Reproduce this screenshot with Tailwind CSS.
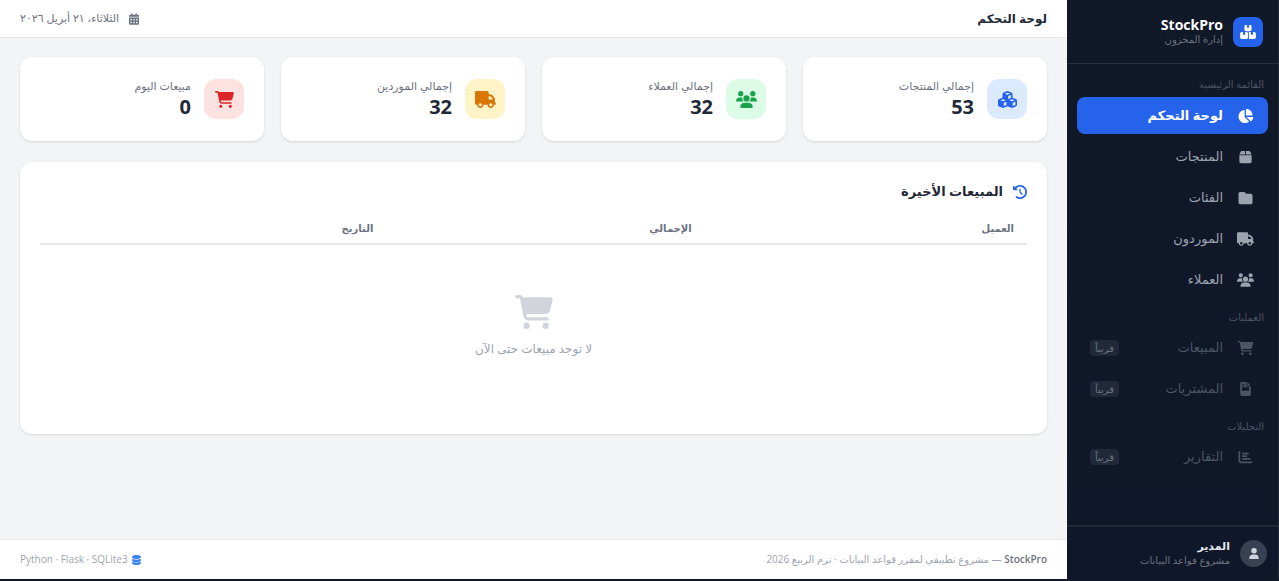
<!DOCTYPE html>
<html lang="ar" dir="rtl">
<head>
  <meta charset="UTF-8" />
  <title>لوحة التحكم | StockPro</title>
  <script src="https://cdn.jsdelivr.net/npm/@tailwindcss/browser@4"></script>
</head>
<body class="bg-[#111827] font-['Open_Sans','DejaVu_Sans',sans-serif] overflow-hidden">
  <svg class="hidden">
    <symbol id="i-cart" viewBox="0 0 576 512"><path d="M0 24C0 10.7 10.7 0 24 0H69.5c22 0 41.5 12.8 50.6 32h411c26.3 0 45.5 25 38.6 50.4l-41 152.3c-8.5 31.4-37 53.3-69.5 53.3H170.7l5.4 28.5c2.2 11.3 12.1 19.5 23.6 19.5H488c13.3 0 24 10.7 24 24s-10.7 24-24 24H199.7c-34.6 0-64.3-24.6-70.7-58.5L77.4 54.5c-.7-3.8-4-6.5-7.9-6.5H24C10.7 48 0 37.3 0 24zM128 464a48 48 0 1 1 96 0 48 48 0 1 1 -96 0zm336-48a48 48 0 1 1 0 96 48 48 0 1 1 0-96z"/></symbol>
    <symbol id="i-truck" viewBox="0 0 640 512"><path d="M48 0C21.5 0 0 21.5 0 48V368c0 26.5 21.5 48 48 48H64c0 53 43 96 96 96s96-43 96-96H384c0 53 43 96 96 96s96-43 96-96h32c17.7 0 32-14.3 32-32s-14.3-32-32-32V288 256 237.3c0-17-6.7-33.3-18.7-45.3L512 114.7c-12-12-28.3-18.7-45.3-18.7H416V48c0-26.5-21.5-48-48-48H48zM416 160h50.7L544 237.3V256H416V160zM112 416a48 48 0 1 1 96 0 48 48 0 1 1 -96 0zm368-48a48 48 0 1 1 0 96 48 48 0 1 1 0-96z"/></symbol>
    <symbol id="i-users" viewBox="0 0 640 512"><path d="M144 0a80 80 0 1 1 0 160A80 80 0 1 1 144 0zM512 0a80 80 0 1 1 0 160A80 80 0 1 1 512 0zM0 298.7C0 239.8 47.8 192 106.7 192h42.7c15.9 0 31 3.5 44.6 9.7c-1.3 7.2-1.9 14.7-1.9 22.3c0 38.2 16.8 72.5 43.3 96c-.2 0-.4 0-.7 0H21.3C9.6 320 0 310.4 0 298.7zM405.3 320c-.2 0-.4 0-.7 0c26.6-23.5 43.3-57.8 43.3-96c0-7.6-.7-15-1.9-22.3c13.6-6.3 28.7-9.7 44.6-9.7h42.7C592.2 192 640 239.8 640 298.7c0 11.8-9.6 21.3-21.3 21.3H405.3zM224 224a96 96 0 1 1 192 0 96 96 0 1 1 -192 0zM128 485.3C128 411.7 187.7 352 261.3 352H378.7C452.3 352 512 411.7 512 485.3c0 14.7-11.9 26.7-26.7 26.7H154.7c-14.7 0-26.7-11.9-26.7-26.7z"/></symbol>
    <symbol id="i-user" viewBox="0 0 448 512"><path d="M224 256A128 128 0 1 0 224 0a128 128 0 1 0 0 256zm-45.7 48C79.8 304 0 383.8 0 482.3C0 498.7 13.3 512 29.7 512H418.3c16.4 0 29.7-13.3 29.7-29.7C448 383.8 368.2 304 269.7 304H178.3z"/></symbol>
    <symbol id="i-calendar" viewBox="0 0 448 512"><path d="M128 0c17.7 0 32 14.3 32 32V64H288V32c0-17.7 14.3-32 32-32s32 14.3 32 32V64h48c26.5 0 48 21.5 48 48v48H0V112C0 85.5 21.5 64 48 64H96V32c0-17.7 14.3-32 32-32zM0 192H448V464c0 26.5-21.5 48-48 48H48c-26.5 0-48-21.5-48-48V192zm64 80v32c0 8.8 7.2 16 16 16h32c8.8 0 16-7.2 16-16V272c0-8.8-7.2-16-16-16H80c-8.8 0-16 7.2-16 16zm128 0v32c0 8.8 7.2 16 16 16h32c8.8 0 16-7.2 16-16V272c0-8.8-7.2-16-16-16H208c-8.8 0-16 7.2-16 16zm144-16c-8.8 0-16 7.2-16 16v32c0 8.8 7.2 16 16 16h32c8.8 0 16-7.2 16-16V272c0-8.8-7.2-16-16-16H336zM64 400v32c0 8.8 7.2 16 16 16h32c8.8 0 16-7.2 16-16V400c0-8.8-7.2-16-16-16H80c-8.8 0-16 7.2-16 16zm144-16c-8.8 0-16 7.2-16 16v32c0 8.8 7.2 16 16 16h32c8.8 0 16-7.2 16-16V400c0-8.8-7.2-16-16-16H208zm112 16v32c0 8.8 7.2 16 16 16h32c8.8 0 16-7.2 16-16V400c0-8.8-7.2-16-16-16H336c-8.8 0-16 7.2-16 16z"/></symbol>
    <symbol id="i-folder" viewBox="0 0 512 512"><path d="M64 480H448c35.3 0 64-28.7 64-64V160c0-35.3-28.7-64-64-64H288c-10.1 0-19.6-4.7-25.6-12.8L243.2 57.6C231.1 41.5 212.1 32 192 32H64C28.7 32 0 60.7 0 96V416c0 35.3 28.7 64 64 64z"/></symbol>
    <symbol id="i-box" viewBox="0 0 448 512"><path d="M50.7 58.5L0 160H208V32H93.7C75.5 32 58.9 42.3 50.7 58.5zM240 160H448L397.3 58.5C389.1 42.3 372.5 32 354.3 32H240V160zm208 32H0V416c0 35.3 28.7 64 64 64H384c35.3 0 64-28.7 64-64V192z"/></symbol>
    <symbol id="i-pie" viewBox="0 0 576 512"><path d="M304 240V16.6c0-9 7-16.6 16-16.6C443.7 0 544 100.3 544 224c0 9-7.6 16-16.6 16H304zM32 272C32 150.7 122.1 50.3 239 34.3c9.2-1.3 17 6.1 17 15.4V288L412.5 444.5c6.7 6.7 6.2 17.7-1.5 23.1C371.8 495.6 323.8 512 272 512C139.5 512 32 404.6 32 272zm526.4 16c9.3 0 16.6 7.8 15.4 17c-7.7 55.9-34.6 105.6-73.9 142.3c-6 5.6-15.4 5.2-21.2-.7L320 288H558.4z"/></symbol>
    <symbol id="i-db" viewBox="0 0 448 512"><path d="M448 80v48c0 44.2-100.3 80-224 80S0 172.2 0 128V80C0 35.8 100.3 0 224 0S448 35.8 448 80zM393.2 214.7c20.8-7.4 39.9-16.9 54.8-28.6V288c0 44.2-100.3 80-224 80S0 332.2 0 288V186.1c14.9 11.8 34 21.2 54.8 28.6C99.7 230.7 159.5 240 224 240s124.3-9.3 169.2-25.3zM0 346.1c14.9 11.8 34 21.2 54.8 28.6C99.7 390.7 159.5 400 224 400s124.3-9.3 169.2-25.3c20.8-7.4 39.9-16.9 54.8-28.6V432c0 44.2-100.3 80-224 80S0 476.2 0 432V346.1z"/></symbol>
    <symbol id="i-history" viewBox="0 0 512 512"><path d="M75 75L41 41C25.9 25.9 0 36.6 0 57.9V168c0 13.3 10.7 24 24 24H134.1c21.4 0 32.1-25.9 17-41l-30.8-30.8C155 85.5 203 64 256 64c106 0 192 86 192 192s-86 192-192 192c-40.8 0-78.6-12.7-109.7-34.4c-14.5-10.1-34.4-6.6-44.6 7.9s-6.6 34.4 7.9 44.6C151.2 495 201.7 512 256 512c141.4 0 256-114.6 256-256S397.4 0 256 0C185.3 0 121.3 28.7 75 75zm181 53c-13.3 0-24 10.7-24 24V256c0 6.4 2.5 12.5 7 17l72 72c9.4 9.4 24.6 9.4 33.9 0s9.4-24.6 0-33.9l-65-65V152c0-13.3-10.7-24-24-24z"/></symbol>
    <symbol id="i-invoice" viewBox="0 0 384 512"><path d="M64 0C28.7 0 0 28.7 0 64V448c0 35.3 28.7 64 64 64H320c35.3 0 64-28.7 64-64V160H256c-17.7 0-32-14.3-32-32V0H64zM256 0V128H384L256 0zM80 64h64c8.8 0 16 7.2 16 16s-7.2 16-16 16H80c-8.8 0-16-7.2-16-16s7.2-16 16-16zm0 64h64c8.8 0 16 7.2 16 16s-7.2 16-16 16H80c-8.8 0-16-7.2-16-16s7.2-16 16-16zm-16 96c0-17.7 14.3-32 32-32H288c17.7 0 32 14.3 32 32v64c0 17.7-14.3 32-32 32H96c-17.7 0-32-14.3-32-32V224zM304 416H80c-8.8 0-16 7.2-16 16s7.2 16 16 16H304c8.8 0 16-7.2 16-16s-7.2-16-16-16z"/></symbol>
    <symbol id="i-chart" viewBox="0 0 512 512"><path d="M32 32c17.7 0 32 14.3 32 32V400c0 8.8 7.2 16 16 16H480c17.7 0 32 14.3 32 32s-14.3 32-32 32H80c-44.2 0-80-35.8-80-80V64C0 46.3 14.3 32 32 32zm96 96c0-17.7 14.3-32 32-32l192 0c17.7 0 32 14.3 32 32s-14.3 32-32 32l-192 0c-17.7 0-32-14.3-32-32zm32 64H288c17.7 0 32 14.3 32 32s-14.3 32-32 32H160c-17.7 0-32-14.3-32-32s14.3-32 32-32zm0 96H416c17.7 0 32 14.3 32 32s-14.3 32-32 32H160c-17.7 0-32-14.3-32-32s14.3-32 32-32z"/></symbol>
    <symbol id="i-cubes" viewBox="0 0 576 512"><path d="M290.8 48.6l78.4 29.7L288 109.5 206.8 78.3l78.4-29.7c1.8-.7 3.8-.7 5.7 0zM136 92.5V204.7c-1.3 .4-2.6 .8-3.9 1.3l-96 36.4C14.4 250.6 0 271.5 0 294.7V413.9c0 22.2 13.1 42.3 33.5 51.3l96 42.2c14.4 6.3 30.7 6.3 45.1 0L288 457.5l113.5 49.9c14.4 6.3 30.7 6.3 45.1 0l96-42.2c20.3-8.9 33.5-29.1 33.5-51.3V294.7c0-23.3-14.4-44.1-36.1-52.4l-96-36.4c-1.3-.5-2.6-.9-3.9-1.3V92.5c0-23.3-14.4-44.1-36.1-52.4l-96-36.4c-12.8-4.8-26.9-4.8-39.7 0l-96 36.4C150.4 48.4 136 69.3 136 92.5zM392 210.6l-82.4 31.2V152.6L392 121v89.6zM154.8 250.9l78.4 29.7L152 311.7 70.8 280.6l78.4-29.7c1.8-.7 3.8-.7 5.7 0zm18.8 204.4V354.8L256 323.2v95.9l-82.4 36.2zM421.2 250.9c1.8-.7 3.8-.7 5.7 0l78.4 29.7L424 311.7l-81.2-31.1 78.4-29.7zM523.2 421.2l-77.6 34.1V354.8L528 323.2v90.7c0 3.2-1.9 6-4.8 7.3z"/></symbol>
    <symbol id="i-boxes" viewBox="0 0 576 512"><path d="M248 0H208c-26.5 0-48 21.5-48 48V160c0 35.3 28.7 64 64 64H352c35.3 0 64-28.7 64-64V48c0-26.5-21.5-48-48-48H328V80c0 8.8-7.2 16-16 16H264c-8.8 0-16-7.2-16-16V0zM64 256c-35.3 0-64 28.7-64 64V448c0 35.3 28.7 64 64 64H224c35.3 0 64-28.7 64-64V320c0-35.3-28.7-64-64-64H184v80c0 8.8-7.2 16-16 16H120c-8.8 0-16-7.2-16-16V256H64zM352 512H512c35.3 0 64-28.7 64-64V320c0-35.3-28.7-64-64-64H472v80c0 8.8-7.2 16-16 16H408c-8.8 0-16-7.2-16-16V256H352c-15 0-28.8 5.2-39.7 13.8c4.9 10.4 7.7 22 7.7 34.2V464c0 12.2-2.8 23.8-7.7 34.2C323.2 506.8 337 512 352 512z"/></symbol>
  </svg>

  <div class="flex h-[579px] w-[1279px]">
    <!-- sidebar -->
    <aside class="w-[212px] shrink-0 flex flex-col bg-[#111827] bg-gradient-to-b from-[#111827] to-[#0f172a] border-r border-[#1f2937]">
      <div class="h-[64px] shrink-0 flex items-center gap-[10px] px-[15px] border-b border-[#262f3d]">
        <div class="w-[30px] h-[30px] rounded-lg bg-[#2563eb] flex items-center justify-center text-white">
          <svg class="w-[16px] h-[14px] fill-current"><use href="#i-boxes"/></svg>
        </div>
        <div>
          <div dir="ltr" class="text-[14px] leading-[16px] font-bold text-white text-right">StockPro</div>
          <div class="text-[10px] leading-[13px] text-[#6b7280]">إدارة المخزون</div>
        </div>
      </div>

      <nav class="flex-1 px-[10px]">
        <div class="text-[10px] leading-[14px] text-[#4b5563] px-[4px] pt-[13px] pb-[6px]">القائمة الرئيسية</div>
        <a class="h-[37px] rounded-lg bg-[#2563eb] text-white flex items-center gap-[14px] px-[14px] text-[13px] font-bold"><svg class="w-[17px] h-[14px] fill-current shrink-0"><use href="#i-pie"/></svg>لوحة التحكم</a>
        <a class="mt-[4px] h-[37px] text-[#9ca3af] flex items-center gap-[14px] px-[14px] text-[13px]"><svg class="w-[17px] h-[14px] fill-current shrink-0"><use href="#i-box"/></svg>المنتجات</a>
        <a class="mt-[4px] h-[37px] text-[#9ca3af] flex items-center gap-[14px] px-[14px] text-[13px]"><svg class="w-[17px] h-[14px] fill-current shrink-0"><use href="#i-folder"/></svg>الفئات</a>
        <a class="mt-[4px] h-[37px] text-[#9ca3af] flex items-center gap-[14px] px-[14px] text-[13px]"><svg class="w-[17px] h-[14px] fill-current shrink-0"><use href="#i-truck"/></svg>الموردون</a>
        <a class="mt-[4px] h-[37px] text-[#9ca3af] flex items-center gap-[14px] px-[14px] text-[13px]"><svg class="w-[17px] h-[14px] fill-current shrink-0"><use href="#i-users"/></svg>العملاء</a>

        <div class="text-[10px] leading-[14px] text-[#4b5563] px-[4px] pt-[12px] pb-[5px]">العمليات</div>
        <a class="h-[37px] text-[#4b5563] flex items-center gap-[14px] px-[14px] text-[13px]"><svg class="w-[17px] h-[14px] fill-current shrink-0"><use href="#i-cart"/></svg>المبيعات<span class="mr-auto -ml-[1px] text-[10px] leading-[16px] px-[5px] rounded bg-[#1f2937] text-[#6b7280]">قريباً</span></a>
        <a class="mt-[4px] h-[37px] text-[#4b5563] flex items-center gap-[14px] px-[14px] text-[13px]"><svg class="w-[17px] h-[14px] fill-current shrink-0"><use href="#i-invoice"/></svg>المشتريات<span class="mr-auto -ml-[1px] text-[10px] leading-[16px] px-[5px] rounded bg-[#1f2937] text-[#6b7280]">قريباً</span></a>

        <div class="text-[10px] leading-[14px] text-[#4b5563] px-[4px] pt-[12px] pb-[5px]">التحليلات</div>
        <a class="h-[37px] text-[#4b5563] flex items-center gap-[14px] px-[14px] text-[13px]"><svg class="w-[17px] h-[14px] fill-current shrink-0"><use href="#i-chart"/></svg>التقارير<span class="mr-auto -ml-[1px] text-[10px] leading-[16px] px-[5px] rounded bg-[#1f2937] text-[#6b7280]">قريباً</span></a>
      </nav>

      <div class="h-[54px] shrink-0 flex items-center gap-[10px] px-[11px] border-t-2 border-[#1f2937]">
        <div class="w-[27px] h-[27px] rounded-full bg-[#374151] flex items-center justify-center text-[#d1d5db]">
          <svg class="w-[10px] h-[11px] fill-current"><use href="#i-user"/></svg>
        </div>
        <div>
          <div class="text-[11px] leading-[14px] font-bold text-[#e5e7eb]">المدير</div>
          <div class="text-[10px] leading-[14px] text-[#6b7280]">مشروع قواعد البيانات</div>
        </div>
      </div>
    </aside>

    <!-- main -->
    <div class="flex-1 flex flex-col bg-[#f3f4f6] min-w-0">
      <header class="h-[38px] shrink-0 bg-white border-b border-[#e5e7eb] flex items-center justify-between px-[20px]">
        <h1 class="text-[12px] font-semibold text-[#1f2937]">لوحة التحكم</h1>
        <div class="flex items-center gap-[10px] text-[11px] text-[#6b7280]">
          <svg class="w-[10px] h-[12px] fill-current"><use href="#i-calendar"/></svg>
          <span>الثلاثاء، ٢١ أبريل ٢٠٢٦</span>
        </div>
      </header>

      <main class="flex-1 px-[20px] pt-[19px]">
        <div class="grid grid-cols-4 gap-[17px]">
          <div class="h-[84px] bg-white rounded-xl shadow-sm flex items-center gap-[13px] px-[20px]">
            <div class="w-[40px] h-[40px] rounded-xl bg-[#dbeafe] text-[#2563eb] flex items-center justify-center"><svg class="w-[19px] h-[17px] fill-current"><use href="#i-cubes"/></svg></div>
            <div><div class="text-[11px] leading-[16px] text-[#6b7280]">إجمالي المنتجات</div><div class="text-[20px] leading-[26px] font-bold text-[#1f2937]">53</div></div>
          </div>
          <div class="h-[84px] bg-white rounded-xl shadow-sm flex items-center gap-[13px] px-[20px]">
            <div class="w-[40px] h-[40px] rounded-xl bg-[#dcfce7] text-[#16a34a] flex items-center justify-center"><svg class="w-[21px] h-[17px] fill-current"><use href="#i-users"/></svg></div>
            <div><div class="text-[11px] leading-[16px] text-[#6b7280]">إجمالي العملاء</div><div class="text-[20px] leading-[26px] font-bold text-[#1f2937]">32</div></div>
          </div>
          <div class="h-[84px] bg-white rounded-xl shadow-sm flex items-center gap-[13px] px-[20px]">
            <div class="w-[40px] h-[40px] rounded-xl bg-[#fef3c7] text-[#d97706] flex items-center justify-center"><svg class="w-[21px] h-[17px] fill-current"><use href="#i-truck"/></svg></div>
            <div><div class="text-[11px] leading-[16px] text-[#6b7280]">إجمالي الموردين</div><div class="text-[20px] leading-[26px] font-bold text-[#1f2937]">32</div></div>
          </div>
          <div class="h-[84px] bg-white rounded-xl shadow-sm flex items-center gap-[13px] px-[20px]">
            <div class="w-[40px] h-[40px] rounded-xl bg-[#fee2e2] text-[#dc2626] flex items-center justify-center"><svg class="w-[19px] h-[17px] fill-current"><use href="#i-cart"/></svg></div>
            <div><div class="text-[11px] leading-[16px] text-[#6b7280]">مبيعات اليوم</div><div class="text-[20px] leading-[26px] font-bold text-[#1f2937]">0</div></div>
          </div>
        </div>

        <section class="mt-[21px] h-[272px] bg-white rounded-xl shadow-sm px-[20px] pt-[20px]">
          <div class="flex items-center gap-[10px] h-[20px]">
            <svg class="w-[14px] h-[14px] fill-[#2563eb]"><use href="#i-history"/></svg>
            <h2 class="text-[13px] font-bold text-[#1f2937]">المبيعات الأخيرة</h2>
          </div>
          <div class="mt-[12px] h-[31px] grid grid-cols-3 items-center px-[13px] border-b-2 border-[#e5e7eb] text-[10px] font-semibold text-[#6b7280]">
            <div>العميل</div>
            <div class="pr-[2px]">الإجمالي</div>
            <div>التاريخ</div>
          </div>
          <div class="flex flex-col items-center pt-[50px]">
            <svg class="w-[38px] h-[34px] fill-[#d1d5db]"><use href="#i-cart"/></svg>
            <div class="mt-[11px] text-[12px] text-[#9ca3af]">لا توجد مبيعات حتى الآن</div>
          </div>
        </section>
      </main>

      <footer class="h-[40px] shrink-0 bg-white border-t border-[#e5e7eb] flex items-center justify-between px-[20px] text-[10px] text-[#9ca3af]">
        <div><span class="font-semibold text-[#6b7280]">StockPro</span> — مشروع تطبيقي لمقرر قواعد البيانات · ترم الربيع 2026</div>
        <div class="flex items-center gap-[4px]"><svg class="w-[9px] h-[10px] fill-[#3b82f6]"><use href="#i-db"/></svg><span dir="ltr">Python · Flask · SQLite3</span></div>
      </footer>
    </div>
  </div>
</body>
</html>
